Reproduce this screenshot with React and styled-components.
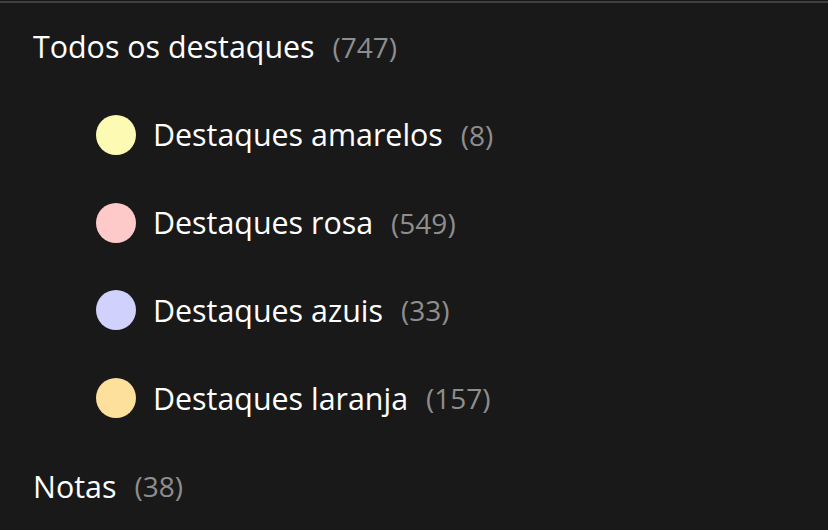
import React from 'react';
import styled, { createGlobalStyle } from 'styled-components';

const GlobalStyle = createGlobalStyle`
    html, body {
        margin: 0;
        padding: 0;
        background: #191919;
    }
    body {
        font-family: "Open Sans", "Noto Sans", sans-serif;
    }
`

const items = [
    { label: 'Destaques amarelos', count: 8, color: '#fdfbb3' },
    { label: 'Destaques rosa', count: 549, color: '#fdc9c9' },
    { label: 'Destaques azuis', count: 33, color: '#d1d1fd' },
    { label: 'Destaques laranja', count: 157, color: '#fde09c' },
]

function App() {
    return (
        <>
            <GlobalStyle />
            <Panel>
                <Row>
                    <Label>Todos os destaques</Label>
                    <Count>(747)</Count>
                </Row>
                {items.map(item => (
                    <Row key={item.label} $indent>
                        <Dot $color={item.color} />
                        <Label>{item.label}</Label>
                        <Count>({item.count})</Count>
                    </Row>
                ))}
                <Row>
                    <Label>Notas</Label>
                    <Count>(38)</Count>
                </Row>
            </Panel>
        </>
    )
}

const Panel = styled.div`
    margin-top: 1px;
    border-top: 2px solid #404040;
    height: 527px;
    display: flex;
    flex-direction: column;
    background: #191919;
`

const Row = styled.div`
    height: 88px;
    display: flex;
    align-items: center;
    padding-left: ${p => (p.$indent ? '96px' : '33px')};
`

const Dot = styled.span`
    width: 40px;
    height: 40px;
    border-radius: 50%;
    background: ${p => p.$color};
    margin-right: 17px;
    flex-shrink: 0;
`

const Label = styled.span`
    color: #ffffff;
    font-size: 30.4px;
`

const Count = styled.span`
    color: #8e8e8e;
    font-size: 28px;
    margin-left: 18px;
`

export default App
